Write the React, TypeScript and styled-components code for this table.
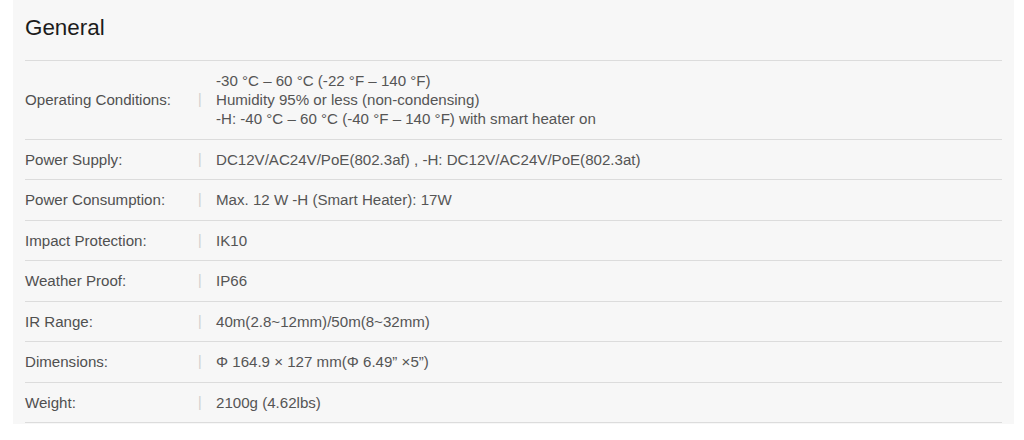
import React from "react";
import styled, { createGlobalStyle } from "styled-components";

const GlobalStyle = createGlobalStyle`
  body {
    margin: 0;
    background: #ffffff;
    font-family: "Liberation Sans", Arial, sans-serif;
  }
`;

const Panel = styled.section`
  width: 1001px;
  margin-left: 13px;
  padding: 0 12px;
  box-sizing: border-box;
  background-color: #f7f7f7;
  padding-bottom: 1px;
`;

const Title = styled.h2`
  margin: 0;
  padding: 15px 0 19px;
  font-size: 22.4px;
  line-height: 26px;
  font-weight: 400;
  color: #1c1c1c;
  border-bottom: 1px solid #dcdcdc;
`;

const Row = styled.div`
  display: grid;
  grid-template-columns: 173px 18px 1fr;
  align-items: center;
  padding: 10.25px 0;
  font-size: 15.1px;
  line-height: 19px;
  color: #555555;
  border-bottom: 1px solid #dcdcdc;
`;

const Label = styled.div`
  color: #505050;
`;

const Divider = styled.span`
  color: #cfcfcf;
  font-size: 14px;
`;

const Value = styled.div`
  display: flex;
  flex-direction: column;
`;

interface Spec {
  label: string;
  lines: string[];
}

const specs: Spec[] = [
  {
    label: "Operating Conditions:",
    lines: [
      "-30 °C – 60 °C (-22 °F – 140 °F)",
      "Humidity 95% or less (non-condensing)",
      "-H: -40 °C – 60 °C (-40 °F – 140 °F) with smart heater on",
    ],
  },
  { label: "Power Supply:", lines: ["DC12V/AC24V/PoE(802.3af) , -H: DC12V/AC24V/PoE(802.3at)"] },
  { label: "Power Consumption:", lines: ["Max. 12 W -H (Smart Heater): 17W"] },
  { label: "Impact Protection:", lines: ["IK10"] },
  { label: "Weather Proof:", lines: ["IP66"] },
  { label: "IR Range:", lines: ["40m(2.8~12mm)/50m(8~32mm)"] },
  { label: "Dimensions:", lines: ["Φ 164.9 × 127 mm(Φ 6.49” ×5”)"] },
  { label: "Weight:", lines: ["2100g (4.62lbs)"] },
];

export default function App() {
  return (
    <>
      <GlobalStyle />
      <Panel>
        <Title>General</Title>
        {specs.map((s) => (
          <Row key={s.label}>
            <Label>{s.label}</Label>
            <Divider>|</Divider>
            <Value>
              {s.lines.map((l) => (
                <span key={l}>{l}</span>
              ))}
            </Value>
          </Row>
        ))}
      </Panel>
    </>
  );
}
